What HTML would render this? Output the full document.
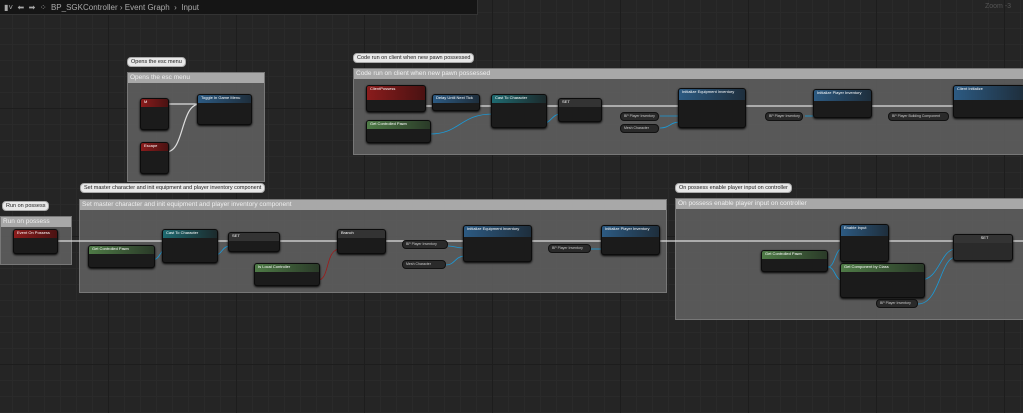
<!DOCTYPE html>
<html><head><meta charset="utf-8"><style>
*{margin:0;padding:0;box-sizing:border-box}
body{width:1023px;height:413px;overflow:hidden;background:#252525;font-family:"Liberation Sans",sans-serif;position:relative;
background-image:linear-gradient(#1d1d1d 1px,transparent 1px),linear-gradient(90deg,#1d1d1d 1px,transparent 1px),linear-gradient(#2a2a2a 1px,transparent 1px),linear-gradient(90deg,#2a2a2a 1px,transparent 1px);
background-size:128px 128px,128px 128px,16px 16px,16px 16px;background-position:-20px -20px}
.a{position:absolute}
.bar{left:0;top:0;width:478px;height:15px;background:#151515;color:#aaa;font-size:8px;line-height:15px;border-right:1px solid #333;border-bottom:1px solid #333}
.bub{position:absolute;background:#e8e8e8;border:1px solid #aaa;border-radius:4px;font-size:5.5px;color:#222;line-height:8px;padding:0 3px;white-space:nowrap}
.cm{position:absolute;background:rgba(98,98,98,.85);border:1px solid #777}
.cm .h{height:10px;background:#a8a8a8;color:#eee;font-size:6.5px;line-height:10px;padding-left:2px;white-space:nowrap;overflow:hidden}
.n{position:absolute;background:#1b1b1b;border:1px solid #0c0c0c;border-radius:3px;box-shadow:0 1px 2px #000}
.n .t{height:8px;border-radius:2px 2px 0 0;font-size:4px;color:#fff;padding-left:3px;line-height:6px}
.r{background:linear-gradient(90deg,#8a1c1c,#4a1212)}
.b{background:linear-gradient(90deg,#2c5a82,#1e2e3c)}
.g{background:linear-gradient(90deg,#4e7a46,#2a3a28)}
.c{background:linear-gradient(90deg,#1e6a70,#1c2a2c)}
.k{background:#333}
.p{position:absolute;background:#2a2a2a;border:1px solid #111;border-radius:4px;height:9px;font-size:3.5px;color:#ccc;line-height:7px;padding-left:3px}
</style></head><body>
<div class="a bar"><span style="margin-left:4px">▮˅ &nbsp;⬅ &nbsp;➡ &nbsp;⁘ &nbsp;BP_SGKController › Event Graph &nbsp;› &nbsp;Input</span></div>
<div class="a" style="left:985px;top:3px;font-size:7px;color:#555">Zoom -3</div>

<div class="bub" style="left:127px;top:57px">Opens the esc menu</div>
<div class="cm" style="left:127px;top:72px;width:138px;height:110px"><div class="h">Opens the esc menu</div></div>
<div class="bub" style="left:353px;top:53px">Code run on client when new pawn possessed</div>
<div class="cm" style="left:353px;top:68px;width:672px;height:87px"><div class="h">Code run on client when new pawn possessed</div></div>
<div class="bub" style="left:80px;top:183px">Set master character and init equipment and player inventory component</div>
<div class="cm" style="left:79px;top:199px;width:588px;height:94px"><div class="h">Set master character and init equipment and player inventory component</div></div>
<div class="bub" style="left:2px;top:201px">Run on possess</div>
<div class="cm" style="left:0;top:216px;width:72px;height:49px"><div class="h">Run on possess</div></div>
<div class="bub" style="left:675px;top:183px">On possess enable player input on controller</div>
<div class="cm" style="left:675px;top:198px;width:350px;height:122px"><div class="h">On possess enable player input on controller</div></div>

<svg class="a" style="left:0;top:0" width="1023" height="413">
<g stroke="#ddd" stroke-width="1.2" fill="none">
<path d="M166 104 H200"/><path d="M166 152 C185 152,180 104,200 104"/>
<path d="M426 106 H1023"/><path d="M58 241 H1023"/>
</g>
<g stroke="#1a9ad8" stroke-width="0.8" fill="none">
<path d="M430 134 C460 134,460 114,493 114"/><path d="M545 123 C550 123,553 114,560 114"/>
<path d="M660 116 H680"/><path d="M660 128 C670 128,670 122,680 122"/><path d="M805 116 H815"/>
<path d="M152 260 C160 260,160 250,165 250"/><path d="M215 255 C222 255,222 246,230 246"/>
<path d="M448 246 C455 246,455 248,465 248"/><path d="M446 265 C455 265,455 256,465 256"/><path d="M591 249 H603"/>
<path d="M828 267 C835 267,835 249,842 249"/><path d="M828 267 C835 267,835 280,842 280"/><path d="M920 280 C940 280,940 249,956 249"/><path d="M918 304 C940 304,940 257,956 257"/>
</g>
<path d="M318 280 C330 280,325 249,340 249" stroke="#a01818" stroke-width="0.8" fill="none"/>
</svg>

<div class="n" style="left:140px;top:98px;width:29px;height:32px"><div class="t r">M</div></div>
<div class="n" style="left:140px;top:142px;width:29px;height:32px"><div class="t r">Escape</div></div>
<div class="n" style="left:197px;top:94px;width:55px;height:31px"><div class="t b">Toggle In Game Menu</div></div>

<div class="n" style="left:366px;top:85px;width:60px;height:27px"><div class="t r" style="height:14px">ClientPossess</div></div>
<div class="n" style="left:432px;top:94px;width:48px;height:17px"><div class="t b">Delay Until Next Tick</div></div>
<div class="n" style="left:491px;top:94px;width:56px;height:34px"><div class="t c">Cast To Character</div></div>
<div class="n" style="left:558px;top:98px;width:44px;height:24px"><div class="t k">SET</div></div>
<div class="n" style="left:366px;top:120px;width:65px;height:23px"><div class="t g">Get Controlled Pawn</div></div>
<div class="p" style="left:620px;top:112px;width:39px">BP Player Inventory</div>
<div class="p" style="left:620px;top:124px;width:39px">Mesh Character</div>
<div class="n" style="left:678px;top:88px;width:68px;height:40px"><div class="t b" style="height:11px">Initialize Equipment Inventory</div></div>
<div class="p" style="left:765px;top:112px;width:38px">BP Player Inventory</div>
<div class="n" style="left:813px;top:89px;width:59px;height:29px"><div class="t b" style="height:11px">Initialize Player Inventory</div></div>
<div class="p" style="left:888px;top:112px;width:61px">BP Player Building Component</div>
<div class="n" style="left:953px;top:85px;width:72px;height:33px"><div class="t b" style="height:14px">Client Initialize</div></div>

<div class="n" style="left:13px;top:229px;width:45px;height:25px"><div class="t r">Event On Possess</div></div>
<div class="n" style="left:88px;top:245px;width:67px;height:23px"><div class="t g">Get Controlled Pawn</div></div>
<div class="n" style="left:162px;top:229px;width:56px;height:34px"><div class="t c">Cast To Character</div></div>
<div class="n" style="left:228px;top:232px;width:52px;height:20px"><div class="t k">SET</div></div>
<div class="n" style="left:337px;top:229px;width:49px;height:25px"><div class="t k">Branch</div></div>
<div class="n" style="left:254px;top:263px;width:66px;height:23px"><div class="t g">Is Local Controller</div></div>
<div class="p" style="left:402px;top:240px;width:46px">BP Player Inventory</div>
<div class="p" style="left:402px;top:260px;width:44px">Mesh Character</div>
<div class="n" style="left:463px;top:225px;width:69px;height:37px"><div class="t b" style="height:11px">Initialize Equipment Inventory</div></div>
<div class="p" style="left:548px;top:244px;width:43px">BP Player Inventory</div>
<div class="n" style="left:601px;top:225px;width:59px;height:30px"><div class="t b" style="height:11px">Initialize Player Inventory</div></div>

<div class="n" style="left:840px;top:224px;width:49px;height:38px"><div class="t b" style="height:11px">Enable Input</div></div>
<div class="n" style="left:761px;top:250px;width:67px;height:22px"><div class="t g">Get Controlled Pawn</div></div>
<div class="n" style="left:840px;top:263px;width:85px;height:35px"><div class="t g">Get Component by Class</div></div>
<div class="p" style="left:876px;top:299px;width:42px">BP Player Inventory</div>
<div class="n" style="left:953px;top:234px;width:60px;height:27px;background:#2a2a2a"><div class="t k" style="text-align:center">SET</div></div>
</body></html>
